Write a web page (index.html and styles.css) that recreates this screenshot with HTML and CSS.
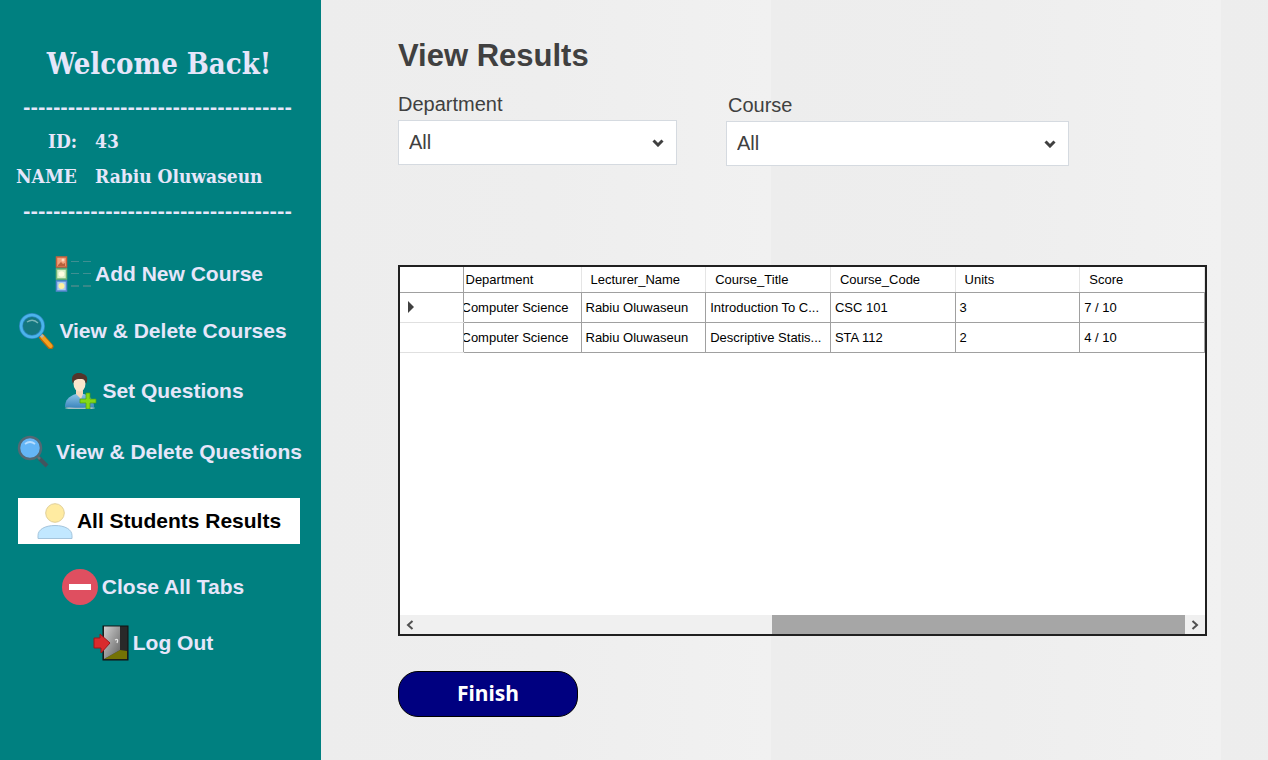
FILE: index.html
```html
<!DOCTYPE html>
<html lang="en">
<head>
<meta charset="utf-8">
<meta name="viewport" content="width=device-width, initial-scale=1">
<title>View Results</title>
<link rel="stylesheet" href="styles.css">
</head>
<body>
<div class="app">
  <aside class="sidebar">
    <h2 class="welcome">Welcome Back!</h2>
    <div class="rule">------------------------------------</div>
    <dl class="profile">
      <dt class="profile-id">ID:</dt><dd>43</dd>
      <dt>NAME</dt><dd>Rabiu Oluwaseun</dd>
    </dl>
    <div class="rule">------------------------------------</div>
    <nav class="menu">
      <button class="item" type="button">
        <svg class="icon" viewBox="0 0 36 36" aria-hidden="true">
          <rect x="1.500" y="1" width="10" height="10" fill="#f0a27c" stroke="#c8623c" stroke-width="1.500"/><path d="M3 9l3-3 2 2 2-1v3H3z" fill="#b9603c"/><circle cx="8" cy="4" r="1.500" fill="#ffd9bd"/>
          <rect x="1.500" y="13" width="10" height="10" fill="#d9f0c8" stroke="#72b676" stroke-width="1.500"/><circle cx="6.500" cy="18" r="2.800" fill="#fdfde0"/>
          <rect x="1.500" y="25" width="10" height="10" fill="#a9ccf0" stroke="#5585d0" stroke-width="1.500"/><circle cx="6.500" cy="30" r="3" fill="#fff0a0"/>
          <path d="M16 5.500h8M28 5.500h8M16 17.500h8M28 17.500h8" stroke="#3f8f92"/><path d="M16 30h8M28 30h8" stroke="#6f9090"/>
        </svg>
        <span>Add New Course</span>
      </button>
      <button class="item item-courses" type="button">
        <svg class="icon" viewBox="0 0 36 36" aria-hidden="true">
          <path d="M23 24l8.500 9.500" stroke="#b8690c" stroke-width="6" stroke-linecap="round"/><path d="M23 23.500l8.500 9.500" stroke="#f4a120" stroke-width="4" stroke-linecap="round"/>
          <path d="M20 20l4 4" stroke="#a8b8bd" stroke-width="3"/>
          <circle cx="13" cy="13" r="11" fill="#14777f" stroke="#2c87bd" stroke-width="4"/><circle cx="13" cy="13" r="11" fill="none" stroke="#4bb4ec" stroke-width="2.500"/>
          <path d="M8 9q6-4 11 1" fill="none" stroke="#79b6b8" stroke-width="1.500"/>
        </svg>
        <span>View &amp; Delete Courses</span>
      </button>
      <button class="item item-set" type="button">
        <svg class="icon" viewBox="0 0 36 36" aria-hidden="true">
          <defs><linearGradient id="shirt" x2="0" y2="1"><stop stop-color="#8cc4e8"/><stop offset="1" stop-color="#3c86bd"/></linearGradient></defs>
          <ellipse cx="18" cy="35" rx="15" ry="1.500" fill="#a5c0c4"/>
          <path d="M3 34c0-7 4-11 11-13h8c6 2 10 6 10 13-8 1-22 1-29 0z" fill="url(#shirt)"/>
          <path d="M14 17h7v4l-2 5-5-5z" fill="#f4d8bb"/>
          <ellipse cx="17.500" cy="10.500" rx="6" ry="8" fill="#fae6cd"/>
          <path d="M11 11C7 1 16-2 21 1c5 1 5 6 3 10-1-4-2-5-5-5-4 0-7 0-8 5z" fill="#54352b"/>
          <path d="M24 20h4v6h6v4h-6v6h-4v-6h-6v-4h6z" fill="#84d818" stroke="#48a013" stroke-width=".7"/>
        </svg>
        <span>Set Questions</span>
      </button>
      <button class="item item-questions" type="button">
        <svg class="icon" viewBox="0 0 36 36" aria-hidden="true">
          <path d="M23 24l8 8" stroke="#42545e" stroke-width="4"/><path d="M20 21l4 4" stroke="#657078" stroke-width="2.500"/>
          <circle cx="14" cy="14" r="11" fill="#64b5f6" stroke="#536873" stroke-width="2.500"/>
          <path d="M9 10q5-4 10 0" fill="none" stroke="#b7ddff" stroke-width="1.700"/>
        </svg>
        <span>View &amp; Delete Questions</span>
      </button>
      <button class="item item-active" type="button" aria-current="page">
        <svg class="icon" viewBox="0 0 36 36" aria-hidden="true">
          <circle cx="18" cy="10" r="9.300" fill="#ffeba1" stroke="#e0cf98"/>
          <path d="M1 35.500v-3c0-6 7-10 17-10s17 4 17 10v3z" fill="#c2e8ff" stroke="#a4c4dc"/>
        </svg>
        <span>All Students Results</span>
      </button>
      <button class="item item-close" type="button">
        <svg class="icon" viewBox="0 0 36 36" aria-hidden="true">
          <circle cx="18" cy="18" r="18" fill="#df4f60"/><rect x="7" y="15" width="22" height="6" fill="#fff"/>
        </svg>
        <span>Close All Tabs</span>
      </button>
      <button class="item item-logout" type="button">
        <svg class="icon" viewBox="0 0 36 36" aria-hidden="true">
          <defs><linearGradient id="door" x2="1" y2="1"><stop stop-color="#d0d0d0"/><stop offset="1" stop-color="#626262"/></linearGradient></defs>
          <rect x="10" y="1" width="25" height="34" fill="#292929" stroke="#111"/>
          <path d="M11 34l16-9 7 1v8z" fill="#747205"/>
          <path d="M11 1.500h16V25l-16 9z" fill="url(#door)"/>
          <path d="M22 15q4-2 2 3" stroke="#e5e5e5" stroke-width="1.300" fill="none"/>
          <path d="M1 13h6V9l10 9-9 10v-5H1z" fill="#d92b2c" stroke="#9c171b"/>
        </svg>
        <span>Log Out</span>
      </button>
    </nav>
  </aside>
  <main class="content">
    <h1 class="title">View Results</h1>
    <div class="filters">
      <div class="field field-department">
        <label for="department">Department</label>
        <div class="picker">
          <select id="department"><option>All</option></select>
          <svg class="chevron" viewBox="0 0 12 8" aria-hidden="true"><path d="M1.500 1.500L6 6l4.500-4.500"/></svg>
        </div>
      </div>
      <div class="field field-course">
        <label for="course">Course</label>
        <div class="picker">
          <select id="course"><option>All</option></select>
          <svg class="chevron" viewBox="0 0 12 8" aria-hidden="true"><path d="M1.500 1.500L6 6l4.500-4.500"/></svg>
        </div>
      </div>
    </div>
    <section class="grid">
      <div class="grid-body">
        <table>
          <colgroup><col class="col-marker"><col class="col-department"><col><col><col><col><col></colgroup>
          <thead>
            <tr><th class="marker"></th><th class="first">Department</th><th>Lecturer_Name</th><th>Course_Title</th><th>Course_Code</th><th>Units</th><th>Score</th></tr>
          </thead>
          <tbody>
            <tr><td class="marker"><svg class="arrow" viewBox="0 0 6 12" aria-hidden="true"><path d="M0 0l6 6-6 6z"/></svg></td><td><span class="scrolled">Computer Science</span></td><td>Rabiu Oluwaseun</td><td>Introduction To C...</td><td>CSC 101</td><td>3</td><td>7 / 10</td></tr>
            <tr><td class="marker"></td><td><span class="scrolled">Computer Science</span></td><td>Rabiu Oluwaseun</td><td>Descriptive Statis...</td><td>STA 112</td><td>2</td><td>4 / 10</td></tr>
          </tbody>
        </table>
      </div>
      <div class="scrollbar">
        <button type="button" aria-label="Scroll left"><svg viewBox="0 0 8 10" aria-hidden="true"><path d="M6.500 1L2 5l4.500 4"/></svg></button>
        <div class="track"><div class="thumb"></div></div>
        <button type="button" aria-label="Scroll right"><svg viewBox="0 0 8 10" aria-hidden="true"><path d="M1.500 1L6 5 1.500 9"/></svg></button>
      </div>
    </section>
    <button class="finish" type="button">Finish</button>
  </main>
</div>
</body>
</html>
```
FILE: styles.css
```css
* { box-sizing: border-box; }

body {
  margin: 0;
  font-family: "Liberation Sans", Arial, sans-serif;
  color: #404040;
}

button, select { font: inherit; color: inherit; }

.app { display: flex; min-height: 100vh; }

/* Sidebar */
.sidebar {
  flex: 0 0 321px;
  min-width: 0;
  padding: 44px 21px 24px 18px;
  background: #008080;
  color: #e6e6fa;
}

.welcome {
  margin: 0;
  font: bold 29px/40px "Roboto Slab", "DejaVu Serif Condensed", "DejaVu Serif", serif;
  text-align: center;
  white-space: nowrap;
}

.rule {
  margin-top: 14px;
  padding-left: 5px;
  font: bold 18px/20px "DejaVu Serif", serif;
  white-space: nowrap;
}

.profile {
  display: grid;
  grid-template-columns: 77px 1fr;
  row-gap: 7px;
  margin: 9px 0 0 -2px;
  font: bold 19px/28px "Roboto Slab", "DejaVu Serif Condensed", "DejaVu Serif", serif;
  white-space: nowrap;
}

.profile dd { margin: 0; padding-left: 2px; }
.profile-id { padding-left: 32px; }
.profile + .rule { margin-top: 12px; }

.menu { display: flex; flex-direction: column; margin-top: 29px; }

.item {
  display: flex;
  align-items: center;
  justify-content: center;
  gap: 4px;
  min-width: 0;
  height: 46px;
  padding: 0;
  border: 0;
  background: none;
  font-size: 21px;
  font-weight: bold;
  white-space: nowrap;
}

.icon { flex: none; width: 36px; height: 36px; }

.item-courses { margin-top: 11px; padding-right: 12px; }
.item-set { margin-top: 14px; padding-right: 12px; }
.item-questions { margin-top: 15px; }
.item-active { margin-top: 23px; background: #fff; color: #000; }
.item-close { margin-top: 20px; padding-right: 12px; }
.item-logout { margin-top: 10px; padding-right: 12px; }

/* Content */
.content {
  flex: 1;
  min-width: 0;
  padding: 36px 61px 43px 77px;
  background: repeating-linear-gradient(90deg, #ededed 0, #eeeeee 225px, #f1f1f1 450px);
}

.title { margin: 0; font-size: 31px; line-height: 40px; }

.filters { display: flex; gap: 49px; margin-top: 16px; padding-right: 138px; }
.field { display: flex; flex-direction: column; font-size: 20px; }
.field label { line-height: 24px; }
.field-department { flex: 279; }
.field-course { flex: 343; margin-top: 1px; }
.field-course label { padding-left: 2px; }

.picker { display: grid; align-items: center; margin-top: 4px; }
.picker > * { grid-area: 1 / 1; }

.picker select {
  appearance: none;
  width: 100%;
  height: 45px;
  padding: 0 10px 2px;
  border: 1px solid #d5dae0;
  border-radius: 0;
  background: #fff;
}

.chevron {
  justify-self: end;
  width: 12px;
  height: 8px;
  margin-right: 13px;
  fill: none;
  stroke: #404040;
  stroke-width: 3;
  pointer-events: none;
}

/* Results grid */
.grid {
  display: flex;
  flex-direction: column;
  margin-top: 99px;
  border: 2px solid #202020;
  background: #fff;
  color: #000;
}

.grid-body { height: 348px; overflow: hidden; }

table {
  width: 100%;
  border-collapse: collapse;
  table-layout: fixed;
  font-size: 13px;
}

.col-marker { width: 63px; }
.col-department { width: 118px; }

th, td {
  overflow: hidden;
  padding: 0 0 0 4px;
  border-right: 1px solid #a0a0a0;
  border-bottom: 1px solid #a0a0a0;
  text-align: left;
  white-space: nowrap;
}

th {
  height: 25px;
  padding-left: 9px;
  border-right-color: #e5e5e5;
  font-weight: normal;
}

th.first { padding-left: 2px; }
.marker { padding-left: 8px; border-right-color: #a0a0a0; }
td { height: 30px; }
td.marker { border-bottom-color: #e0e0e0; }
.scrolled { display: block; margin-left: -6px; }
.arrow { display: block; width: 6px; height: 12px; fill: #404040; }

.scrollbar { display: flex; height: 19px; background: #f0f0f0; }

.scrollbar button {
  display: grid;
  place-items: center;
  width: 20px;
  padding: 0;
  border: 0;
  background: none;
}

.scrollbar svg {
  width: 8px;
  height: 10px;
  fill: none;
  stroke: #505050;
  stroke-width: 2;
}

.track { flex: 1; display: flex; justify-content: flex-end; }
.thumb { width: 54%; background: #a6a6a6; }

.finish {
  width: 180px;
  height: 46px;
  margin-top: 35px;
  padding: 0 0 3px;
  border: 1px solid #000;
  border-radius: 20px;
  background: #000080;
  color: #fff;
  font: bold 21px "Noto Sans", "Open Sans", sans-serif;
}
```
